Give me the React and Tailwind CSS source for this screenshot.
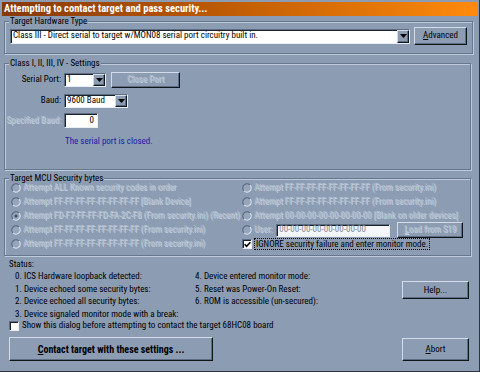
import React from "react";

const BG = "bg-[#8b9cb3]";
const raised =
  "border border-t-[#d3dce7] border-l-[#d3dce7] border-r-[#10151c] border-b-[#10151c] shadow-[inset_-1px_-1px_0_#5d6d83]";
const sunken =
  "border border-t-[#5d6d83] border-l-[#5d6d83] border-r-[#e8eef5] border-b-[#e8eef5] shadow-[inset_1px_1px_0_#1b222c]";
const dis = "text-[#b2c0d1] [text-shadow:1px_1px_0_#c6d0dc]";

const Btn = ({ children, className = "", disabled }) => (
  <button
    className={`${raised} ${BG} flex items-center justify-center shrink-0 ${
      disabled ? dis : "text-black"
    } ${className}`}
  >
    {children}
  </button>
);

const Combo = ({ value, className = "" }) => (
  <div className={`${sunken} bg-white flex shrink-0 ${className}`}>
    <div className="flex-1 pl-[2px] flex items-center overflow-hidden whitespace-nowrap">
      {value}
    </div>
    <div className={`w-[12px] ${raised} ${BG} flex items-center justify-center`}>
      <svg width="7" height="4" viewBox="0 0 7 4">
        <path d="M0 0h7L3.5 4z" fill="#000" />
      </svg>
    </div>
  </div>
);

const Radio = ({ checked }) => (
  <svg width="10" height="10" viewBox="0 0 12 12" className="shrink-0">
    <circle cx="6" cy="6" r="5" fill="#95a6bc" />
    <path d="M9.54 2.46A5 5 0 0 0 2.46 9.54" stroke="#56667c" strokeWidth="1.4" fill="none" />
    <path d="M2.46 9.54A5 5 0 0 0 9.54 2.46" stroke="#dfe6ee" strokeWidth="1.4" fill="none" />
    {checked && <circle cx="6" cy="6" r="1.8" fill="#3c475a" />}
  </svg>
);

const Check = ({ checked }) => (
  <div className={`w-[10px] h-[10px] bg-white ${sunken} flex items-center justify-center shrink-0`}>
    {checked && (
      <svg width="7" height="7" viewBox="0 0 7 7">
        <path d="M0.6 3.2L2.6 5.4L6.4 1.2" stroke="#000" strokeWidth="1.6" fill="none" />
      </svg>
    )}
  </div>
);

const Group = ({ label, className = "", children }) => (
  <fieldset
    className={`ml-[4px] w-[467px] border border-[#66778e] shadow-[inset_1px_1px_0_#bccada,1px_1px_0_#bccada] ${className}`}
  >
    <legend className={`ml-[4px] px-[1px] leading-[10px] ${BG}`}>{label}</legend>
    {children}
  </fieldset>
);

const RadioRow = ({ text, checked }) => (
  <div className="h-[14px] flex items-center gap-[2px]">
    <Radio checked={checked} />
    <span className={`whitespace-nowrap ${dis}`}>{text}</span>
  </div>
);

export default function App() {
  return (
    <div
      className={`w-[480px] h-[372px] ${BG} flex flex-col pt-[2px] overflow-hidden text-[9px] text-black font-['Roboto_Condensed','Liberation_Sans',sans-serif] border-r border-b border-[#2a3340]`}
    >
      {/* title bar */}
      <div className="mx-[2px] h-[14px] shrink-0 bg-gradient-to-r from-[#873807] via-[#c25e05] to-[#ff8a0c] flex items-center pl-[2px]">
        <span className="text-white font-bold text-[10.5px] whitespace-nowrap">
          Attempting to contact target and pass security...
        </span>
      </div>

      {/* hardware type */}
      <Group label="Target Hardware Type" className="h-[38px] shrink-0">
        <div className="flex items-center h-[18px] mt-[1px] px-[5px] gap-[4px]">
          <Combo
            className="w-[400px] h-[15px]"
            value="Class III - Direct serial to target w/MON08 serial port circuitry built in."
          />
          <Btn className="w-[53px] h-[18px]">
            <span>
              <u>A</u>dvanced
            </span>
          </Btn>
        </div>
      </Group>

      {/* settings */}
      <Group label="Class I, II, III, IV - Settings" className="mt-[4px] h-[112px] shrink-0">
        <div className="flex items-center h-[16px] mt-[4px]">
          <span className="w-[57px] text-right pr-[1px]">Serial Port:</span>
          <Combo className="ml-[2px] w-[42px] h-[14px]" value="1" />
          <Btn disabled className="ml-[5px] w-[69px] h-[16px]">
            Close Port
          </Btn>
        </div>
        <div className="flex items-center h-[14px] mt-[6px]">
          <span className="w-[57px] text-right pr-[1px]">Baud:</span>
          <Combo className="ml-[2px] w-[64px] h-[14px]" value="9600 Baud" />
        </div>
        <div className="flex items-center h-[15px] mt-[5px]">
          <span className={`w-[57px] text-right pr-[1px] whitespace-nowrap ${dis}`}>Specified Baud:</span>
          <div className={`ml-[2px] w-[34px] h-[15px] bg-white ${sunken} flex items-center justify-end pr-[3px]`}>
            0
          </div>
        </div>
        <div className="mt-[8px] ml-[60px] leading-[10px] text-[#1c1ca8]">The serial port is closed.</div>
      </Group>

      {/* security bytes */}
      <Group label="Target MCU Security bytes" className="mt-[3px] h-[83px] shrink-0">
        <div className="-mt-[2px] pl-[6px] flex">
          <div className="w-[231px] flex flex-col">
            <RadioRow text="Attempt ALL Known security codes in order" />
            <RadioRow text="Attempt FF-FF-FF-FF-FF-FF-FF-FF [Blank Device]" />
            <RadioRow checked text="Attempt FD-F7-FF-FF-FD-FA-2C-F8 (From security.ini) (Recent)" />
            <RadioRow text="Attempt FF-FF-FF-FF-FF-FF-FF-FF (From security.ini)" />
            <RadioRow text="Attempt FF-FF-FF-FF-FF-FF-FF-FF (From security.ini)" />
          </div>
          <div className="flex flex-col">
            <RadioRow text="Attempt FF-FF-FF-FF-FF-FF-FF-FF (From security.ini)" />
            <RadioRow text="Attempt FF-FF-FF-FF-FF-FF-FF-FF (From security.ini)" />
            <RadioRow text="Attempt 00-00-00-00-00-00-00-00 [Blank on older devices]" />
            <div className="h-[14px] flex items-center gap-[2px]">
              <Radio />
              <span className={dis}>User:</span>
              <div className={`ml-[2px] w-[114px] h-[13px] bg-[#f4f6f8] ${sunken} flex items-center pl-[2px] text-[#7e8896]`}>
                00-00-00-00-00-00-00-00
              </div>
              <Btn disabled className="ml-[5px] w-[66px] h-[16px]">
                <span>
                  <u>L</u>oad from S19
                </span>
              </Btn>
            </div>
            <div className="h-[14px] flex items-center gap-[2px]">
              <Check checked />
              <span className="border border-dotted border-black px-[1px] leading-[10px] whitespace-nowrap">
                IGNORE security failure and enter monitor mode.
              </span>
            </div>
          </div>
        </div>
      </Group>

      {/* status */}
      <div className="pl-[9px] mt-[2px] leading-[12px]">Status:</div>
      <div className="flex pl-[15px] leading-[12.5px]">
        <div className="w-[180px] flex flex-col whitespace-nowrap">
          <span>0. ICS Hardware loopback detected:</span>
          <span>1. Device echoed some security bytes:</span>
          <span>2. Device echoed all security bytes:</span>
          <span>3. Device signaled monitor mode with a break:</span>
        </div>
        <div className="w-[207px] flex flex-col whitespace-nowrap">
          <span>4. Device entered monitor mode:</span>
          <span>5. Reset was Power-On Reset:</span>
          <span>6. ROM is accessible (un-secured):</span>
        </div>
        <Btn className="mt-[11px] w-[67px] h-[18px]">Help...</Btn>
      </div>
      <div className="h-[12px] flex items-center gap-[3px] pl-[9px]">
        <Check />
        <span>Show this dialog before attempting to contact the target 68HC08 board</span>
      </div>
      <div className="flex items-start pl-[9px] pr-[10px] mt-[5px]">
        <Btn className="w-[204px] h-[24px] font-bold text-[10px]">
          <span>
            <u>C</u>ontact target with these settings ...
          </span>
        </Btn>
        <Btn className="ml-auto mt-[1px] w-[67px] h-[23px]">
          <span>
            <u>A</u>bort
          </span>
        </Btn>
      </div>
    </div>
  );
}
